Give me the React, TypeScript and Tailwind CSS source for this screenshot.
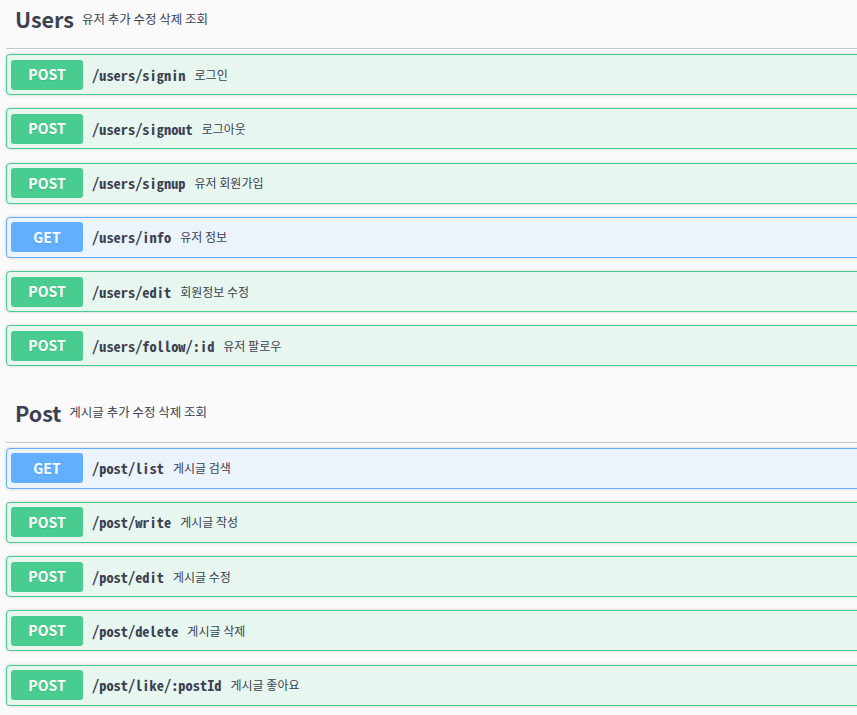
type Method = "POST" | "GET";

interface Op {
  method: Method;
  path: string;
  summary: string;
}

interface Section {
  name: string;
  description: string;
  ops: Op[];
}

const sections: Section[] = [
  {
    name: "Users",
    description: "유저 추가 수정 삭제 조회",
    ops: [
      { method: "POST", path: "/users/signin", summary: "로그인" },
      { method: "POST", path: "/users/signout", summary: "로그아웃" },
      { method: "POST", path: "/users/signup", summary: "유저 회원가입" },
      { method: "GET", path: "/users/info", summary: "유저 정보" },
      { method: "POST", path: "/users/edit", summary: "회원정보 수정" },
      { method: "POST", path: "/users/follow/:id", summary: "유저 팔로우" },
    ],
  },
  {
    name: "Post",
    description: "게시글 추가 수정 삭제 조회",
    ops: [
      { method: "GET", path: "/post/list", summary: "게시글 검색" },
      { method: "POST", path: "/post/write", summary: "게시글 작성" },
      { method: "POST", path: "/post/edit", summary: "게시글 수정" },
      { method: "POST", path: "/post/delete", summary: "게시글 삭제" },
      { method: "POST", path: "/post/like/:postId", summary: "게시글 좋아요" },
    ],
  },
];

function OpBlock({ method, path, summary }: Op) {
  const isGet = method === "GET";
  return (
    <div
      className={`flex items-center h-[41px] mb-[13.25px] rounded-[4px] border px-[4px] shadow-[0_0_3px_rgba(0,0,0,0.19)] ${
        isGet ? "border-[#61affe] bg-[#ebf3fb]" : "border-[#49cc90] bg-[#e7f6ef]"
      }`}
    >
      <span
        className={`flex items-center justify-center w-[72px] h-[30px] rounded-[3px] text-white text-[14px] font-bold [text-shadow:0_1px_0_rgba(0,0,0,0.1)] ${
          isGet ? "bg-[#61affe]" : "bg-[#49cc90]"
        }`}
      >
        {method}
      </span>
      <span className="ml-[9px] font-['Noto_Sans_Mono_CJK_KR','DejaVu_Sans_Mono',monospace] font-bold text-[14.4px] text-[#3b4151]">
        {path}
      </span>
      <span className="ml-[9px] text-[12px] text-[#3b4151]">{summary}</span>
    </div>
  );
}

export default function App() {
  return (
    <div className="w-[857px] h-[715px] overflow-hidden bg-[#fafafa] font-['Noto_Sans_CJK_KR','Noto_Sans',sans-serif] text-[#3b4151]">
      <div className="w-[920px] ml-[6px] -mt-[14px]">
        {sections.map((s) => (
          <div key={s.name}>
            <div className="flex items-center h-[63px] pt-[4px] pl-[9px] border-b border-[#c6c7cc]">
              <span className="text-[21.5px] font-bold leading-none">{s.name}</span>
              <span className="ml-[8px] text-[12.5px]">{s.description}</span>
            </div>
            <div className="mt-[5px]">
              {s.ops.map((op) => (
                <OpBlock key={op.path} {...op} />
              ))}
            </div>
          </div>
        ))}
      </div>
    </div>
  );
}
